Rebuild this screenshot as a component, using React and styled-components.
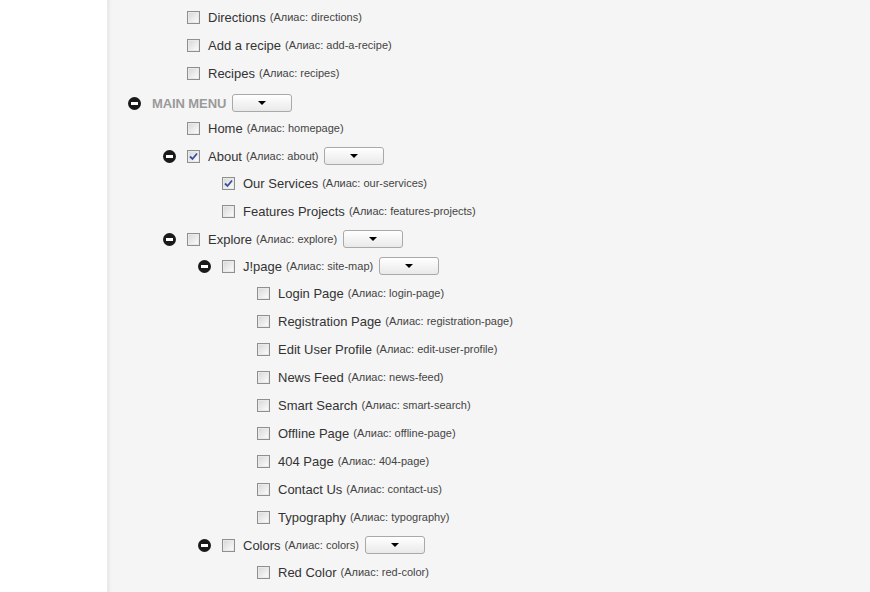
import React from "react";
import styled, { createGlobalStyle } from "styled-components";

const GlobalStyle = createGlobalStyle`
	html, body {
		margin: 0;
		padding: 0;
		background: #ffffff;
		overflow: hidden;
	}
	body {
		font-family: "Liberation Sans", Arial, sans-serif;
	}
`;

const Page = styled.div`
	display: flex;
	width: 870px;
	height: 592px;
	overflow: hidden;
`;

const Sidebar = styled.div`
	width: 107px;
	flex-shrink: 0;
	background: #ffffff;
`;

const Main = styled.div`
	flex: 1;
	background: #f5f5f5;
	border-left: 1px solid #ececec;
	box-shadow: inset 3px 0 3px -2px #e2e2e2;
	padding-top: 3px;
`;

const Tree = styled.ul`
	list-style: none;
	margin: 0;
	padding: 0;
`;

const Row = styled.li`
	display: flex;
	align-items: center;
	height: ${(p) => (p.$heading ? "22px" : "28px")};
	margin-top: ${(p) => (p.$heading ? "5px" : p.$first ? "-1px" : "0")};
	box-sizing: border-box;
	padding-left: ${(p) => 20 + p.$level * 35}px;
`;

const ToggleSlot = styled.span`
	width: 24px;
	height: 13px;
	flex-shrink: 0;
	display: flex;
	align-items: center;
`;

const Minus = styled.span`
	position: relative;
	width: 13px;
	height: 13px;
	border-radius: 50%;
	background: #1a1a1a;

	&::after {
		content: "";
		position: absolute;
		left: 3px;
		top: 5px;
		width: 7px;
		height: 3px;
		background: #ffffff;
	}
`;

const Box = styled.span`
	width: 13px;
	height: 13px;
	box-sizing: border-box;
	flex-shrink: 0;
	border: 1px solid #8e8f8f;
	background: linear-gradient(135deg, #d6d6d6 0%, #ececec 55%, #ffffff 100%);
	box-shadow: inset 0 0 0 1px #e9e9e9;
	display: flex;
	align-items: center;
	justify-content: center;
	margin-right: 8px;
`;

const Label = styled.span`
	font-size: 13px;
	color: #333333;
	white-space: nowrap;
`;

const Alias = styled.span`
	font-size: 11px;
	color: #444444;
	margin-left: 4px;
	white-space: nowrap;
`;

const Heading = styled.span`
	font-size: 13px;
	font-weight: bold;
	color: #9a9a9a;
	letter-spacing: -0.1px;
	text-transform: uppercase;
`;

const DropButton = styled.button`
	width: 60px;
	height: 18px;
	margin-left: 6px;
	padding: 0;
	border: 1px solid #a9a9a9;
	border-radius: 3px;
	background: linear-gradient(#ffffff, #e9e9e9);
	display: flex;
	align-items: center;
	justify-content: center;
	cursor: pointer;
`;

const Caret = styled.span`
	width: 0;
	height: 0;
	border-left: 4px solid transparent;
	border-right: 4px solid transparent;
	border-top: 4px solid #000000;
`;

const tree = [
	{ title: "Directions", alias: "directions", level: 1 },
	{ title: "Add a recipe", alias: "add-a-recipe", level: 1 },
	{ title: "Recipes", alias: "recipes", level: 1 },
	{
		heading: "Main Menu",
		level: 0,
		children: [
			{ title: "Home", alias: "homepage" },
			{
				title: "About",
				alias: "about",
				checked: true,
				children: [
					{ title: "Our Services", alias: "our-services", checked: true },
					{ title: "Features Projects", alias: "features-projects" },
				],
			},
			{
				title: "Explore",
				alias: "explore",
				children: [
					{
						title: "J!page",
						alias: "site-map",
						children: [
							{ title: "Login Page", alias: "login-page" },
							{ title: "Registration Page", alias: "registration-page" },
							{ title: "Edit User Profile", alias: "edit-user-profile" },
							{ title: "News Feed", alias: "news-feed" },
							{ title: "Smart Search", alias: "smart-search" },
							{ title: "Offline Page", alias: "offline-page" },
							{ title: "404 Page", alias: "404-page" },
							{ title: "Contact Us", alias: "contact-us" },
							{ title: "Typography", alias: "typography" },
						],
					},
					{
						title: "Colors",
						alias: "colors",
						children: [{ title: "Red Color", alias: "red-color" }],
					},
				],
			},
		],
	},
];

function Check({ checked }) {
	return (
		<Box>
			{checked && (
				<svg width="9" height="9" viewBox="0 0 9 9">
					<path d="M1 4.5 L3.5 7 L8 1.5" fill="none" stroke="#3a4fa0" strokeWidth="1.8" />
				</svg>
			)}
		</Box>
	);
}

// flatten the tree into rows; remember which row opens a child list
function flatten(nodes, level, out, parentHeading) {
	nodes.forEach((n, i) => {
		const lvl = n.level !== undefined ? n.level : level;
		const first = i === 0 && level > 1 && !parentHeading;
		out.push({ ...n, level: lvl, first });
		if (n.children) flatten(n.children, lvl + 1, out, !!n.heading);
	});
	return out;
}

export default function App() {
	const rows = flatten(tree, 1, [], true);
	return (
		<Page>
			<GlobalStyle />
			<Sidebar />
			<Main>
				<Tree>
					{rows.map((r, i) => {
						const open = !!r.children;
						return (
							<Row key={i} $level={r.level} $heading={!!r.heading} $first={r.first}>
								<ToggleSlot>{open && <Minus />}</ToggleSlot>
								{r.heading ? (
									<Heading>{r.heading}</Heading>
								) : (
									<>
										<Check checked={r.checked} />
										<Label>{r.title}</Label>
										<Alias>(Алиас: {r.alias})</Alias>
									</>
								)}
								{open && (
									<DropButton>
										<Caret />
									</DropButton>
								)}
							</Row>
						);
					})}
				</Tree>
			</Main>
		</Page>
	);
}
